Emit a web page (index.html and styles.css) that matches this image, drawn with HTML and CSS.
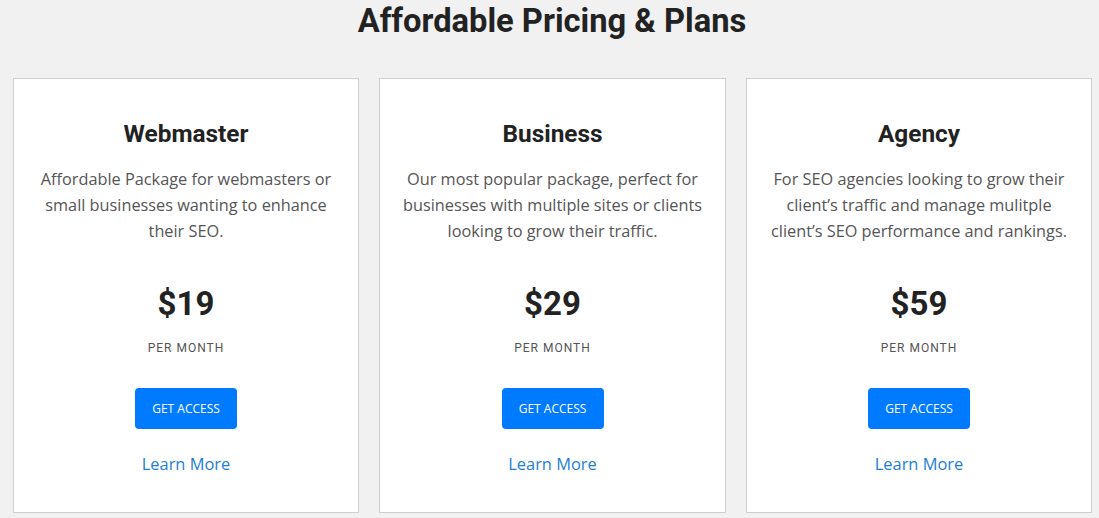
FILE: index.html
```html
<!DOCTYPE html>
<html lang="en">
<head>
    <meta charset="UTF-8">
    <meta name="viewport" content="width=device-width, initial-scale=1.0">
    <title>Affordable Pricing &amp; Plans</title>
    <link rel="stylesheet" href="styles.css">
</head>
<body>
    <h2 class="page-title">Affordable Pricing &amp; Plans</h2>

    <div class="plans">
        <div class="plan">
            <h3>Webmaster</h3>
            <p class="plan-desc">Affordable Package for webmasters or small businesses wanting to enhance their SEO.</p>
            <div class="price">$19</div>
            <div class="period">PER MONTH</div>
            <a href="#" class="btn">GET ACCESS</a>
            <a href="#" class="learn">Learn More</a>
        </div>

        <div class="plan">
            <h3>Business</h3>
            <p class="plan-desc">Our most popular package, perfect for businesses with multiple sites or clients looking to grow their traffic.</p>
            <div class="price">$29</div>
            <div class="period">PER MONTH</div>
            <a href="#" class="btn">GET ACCESS</a>
            <a href="#" class="learn">Learn More</a>
        </div>

        <div class="plan">
            <h3>Agency</h3>
            <p class="plan-desc">For SEO agencies looking to grow their client’s traffic and manage mulitple client’s SEO performance and rankings.</p>
            <div class="price">$59</div>
            <div class="period">PER MONTH</div>
            <a href="#" class="btn">GET ACCESS</a>
            <a href="#" class="learn">Learn More</a>
        </div>
    </div>
</body>
</html>
```

FILE: styles.css
```css
body {
    margin: 0;
    padding: 0 8px 0 13px;
    background-color: #f1f1f1;
    font-family: 'Open Sans', sans-serif;
    color: #222;
}
.page-title {
    font-family: Roboto, sans-serif;
    font-weight: 700;
    font-size: 32.7px;
    line-height: 42px;
    text-align: center;
    margin: 0 0 36px;
    color: #222;
}
.plans {
    display: grid;
    grid-template-columns: 346px 347px 346px;
    gap: 20px;
}
.plan {
    background-color: #fff;
    border: 1px solid #cfcfcf;
    height: 435px;
    box-sizing: border-box;
    padding: 40px 10px 0;
    display: flex;
    flex-direction: column;
    align-items: center;
    text-align: center;
}
.plan h3 {
    font-family: Roboto, sans-serif;
    font-weight: 700;
    font-size: 24.4px;
    line-height: 30px;
    margin: 0 0 17px;
    color: #222;
}
.plan-desc {
    font-size: 16.3px;
    line-height: 26px;
    color: #555;
    margin: 0 0 38px;
    max-width: 300px;
}
.price {
    font-family: Roboto, sans-serif;
    font-weight: 700;
    font-size: 33px;
    line-height: 44px;
    color: #222;
}
.period {
    font-family: Roboto, sans-serif;
    font-size: 12px;
    letter-spacing: 1px;
    color: #555;
    margin-top: 15px;
}
.btn {
    display: block;
    margin-top: 33px;
    width: 102px;
    height: 41px;
    line-height: 41px;
    box-sizing: border-box;
    background-color: #007bff;
    color: #fff;
    border-radius: 4px;
    font-size: 12px;
    text-decoration: none;
}
.learn {
    margin-top: 23px;
    font-size: 16.4px;
    color: #1d7ed8;
    text-decoration: none;
}
```
